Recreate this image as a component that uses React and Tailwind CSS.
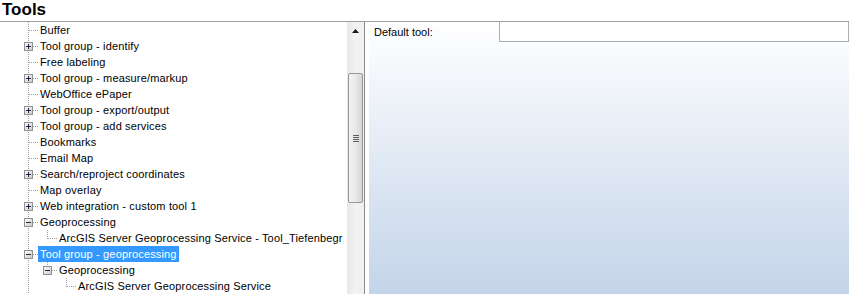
const ROWS = [
  { cells: ["none", "tee"], text: "Buffer" },
  { cells: ["none", "tee"], box: "plus", text: "Tool group - identify" },
  { cells: ["none", "tee"], text: "Free labeling" },
  { cells: ["none", "tee"], box: "plus", text: "Tool group - measure/markup" },
  { cells: ["none", "tee"], text: "WebOffice ePaper" },
  { cells: ["none", "tee"], box: "plus", text: "Tool group - export/output" },
  { cells: ["none", "tee"], box: "plus", text: "Tool group - add services" },
  { cells: ["none", "tee"], text: "Bookmarks" },
  { cells: ["none", "tee"], text: "Email Map" },
  { cells: ["none", "tee"], box: "plus", text: "Search/reproject coordinates" },
  { cells: ["none", "tee"], text: "Map overlay" },
  { cells: ["none", "tee"], box: "plus", text: "Web integration - custom tool 1" },
  { cells: ["none", "tee"], box: "minus", text: "Geoprocessing" },
  { cells: ["none", "vert", "ell"], text: "ArcGIS Server Geoprocessing Service - Tool_Tiefenbegr" },
  { cells: ["none", "tee"], box: "minus", text: "Tool group - geoprocessing", selected: true },
  { cells: ["none", "vert", "ell"], box: "minus", text: "Geoprocessing" },
  { cells: ["none", "vert", "none", "ell"], text: "ArcGIS Server Geoprocessing Service" },
];

function Cell({ type, box }) {
  return (
    <svg width="19" height="16" viewBox="0 0 19 16" className="shrink-0" shapeRendering="crispEdges">
      {(type === "tee" || type === "vert") && (
        <line x1="9.5" y1="0" x2="9.5" y2="16" stroke="#a0a0a0" strokeDasharray="1 1" />
      )}
      {type === "ell" && <line x1="9.5" y1="0" x2="9.5" y2="9" stroke="#a0a0a0" strokeDasharray="1 1" />}
      {(type === "tee" || type === "ell") && (
        <line x1="10" y1="8.5" x2="19" y2="8.5" stroke="#a0a0a0" strokeDasharray="1 1" />
      )}
      {box && (
        <g>
          <defs>
            <linearGradient id="bx" x1="0" y1="0" x2="1" y2="1">
              <stop offset="0" stopColor="#ffffff" />
              <stop offset="1" stopColor="#c8c8c8" />
            </linearGradient>
          </defs>
          <rect x="5.5" y="4.5" width="8" height="8" fill="url(#bx)" stroke="#919191" />
          <line x1="7" y1="8.5" x2="12" y2="8.5" stroke="#1e2a44" />
          {box === "plus" && <line x1="9.5" y1="6" x2="9.5" y2="11" stroke="#1e2a44" />}
        </g>
      )}
    </svg>
  );
}

function TreeRow({ row }) {
  return (
    <div className="flex h-[16px] items-center whitespace-nowrap">
      {row.cells.map((c, i) => (
        <Cell key={i} type={c} box={i === row.cells.length - 1 ? row.box : null} />
      ))}
      <span
        className={
          row.selected
            ? "h-[16px] px-[2px] leading-[16px] tracking-[0.15px] bg-[#3399ff] text-white"
            : "h-[16px] px-[2px] leading-[16px] tracking-[0.15px]"
        }
      >
        {row.text}
      </span>
    </div>
  );
}

function Scrollbar() {
  return (
    <div className="w-[17px] shrink-0 flex flex-col bg-gradient-to-r from-[#e8e8e8] via-[#f2f2f2] to-[#f0f0f0]">
      <div className="h-[17px] flex items-center justify-center">
        <svg width="7" height="4" viewBox="0 0 7 4">
          <path d="M3.5 0 L7 4 L0 4 Z" fill="#1a1a1a" />
        </svg>
      </div>
      <div className="mt-[34px] mx-[1px] h-[130px] rounded-[2px] border border-[#979797] bg-gradient-to-r from-[#f3f3f3] via-[#e9e9e9] to-[#d6d6d6] flex flex-col items-center justify-center gap-[1px]">
        <div className="w-[6px] h-px bg-[#5c5c5c]" />
        <div className="w-[6px] h-px bg-[#5c5c5c]" />
        <div className="w-[6px] h-px bg-[#5c5c5c]" />
        <div className="w-[6px] h-px bg-[#5c5c5c]" />
      </div>
    </div>
  );
}

export default function App() {
  return (
    <div className="w-[849px] h-[294px] overflow-hidden bg-white text-black text-[11px] font-['Liberation_Sans',Arial,sans-serif]">
      <div className="h-[22px] border-b border-[#a0a0a0] pl-[2px] text-[17px] font-bold leading-[20px]">Tools</div>
      <div className="flex h-[272px]">
        <div className="w-[347px] shrink-0 overflow-hidden">
          {ROWS.map((r, i) => (
            <TreeRow key={i} row={r} />
          ))}
        </div>
        <Scrollbar />
        <div className="w-px shrink-0 bg-[#8a8a8a]" />
        <div className="w-[4px] shrink-0" />
        <div className="flex-1 flex items-start bg-gradient-to-b from-white to-[#c4d4e9]">
          <div className="w-[130px] shrink-0 pl-[5px] leading-[20px]">Default tool:</div>
          <div className="flex-1 h-[20px] bg-white border-x border-b border-[#abadb3]" />
        </div>
      </div>
    </div>
  );
}
